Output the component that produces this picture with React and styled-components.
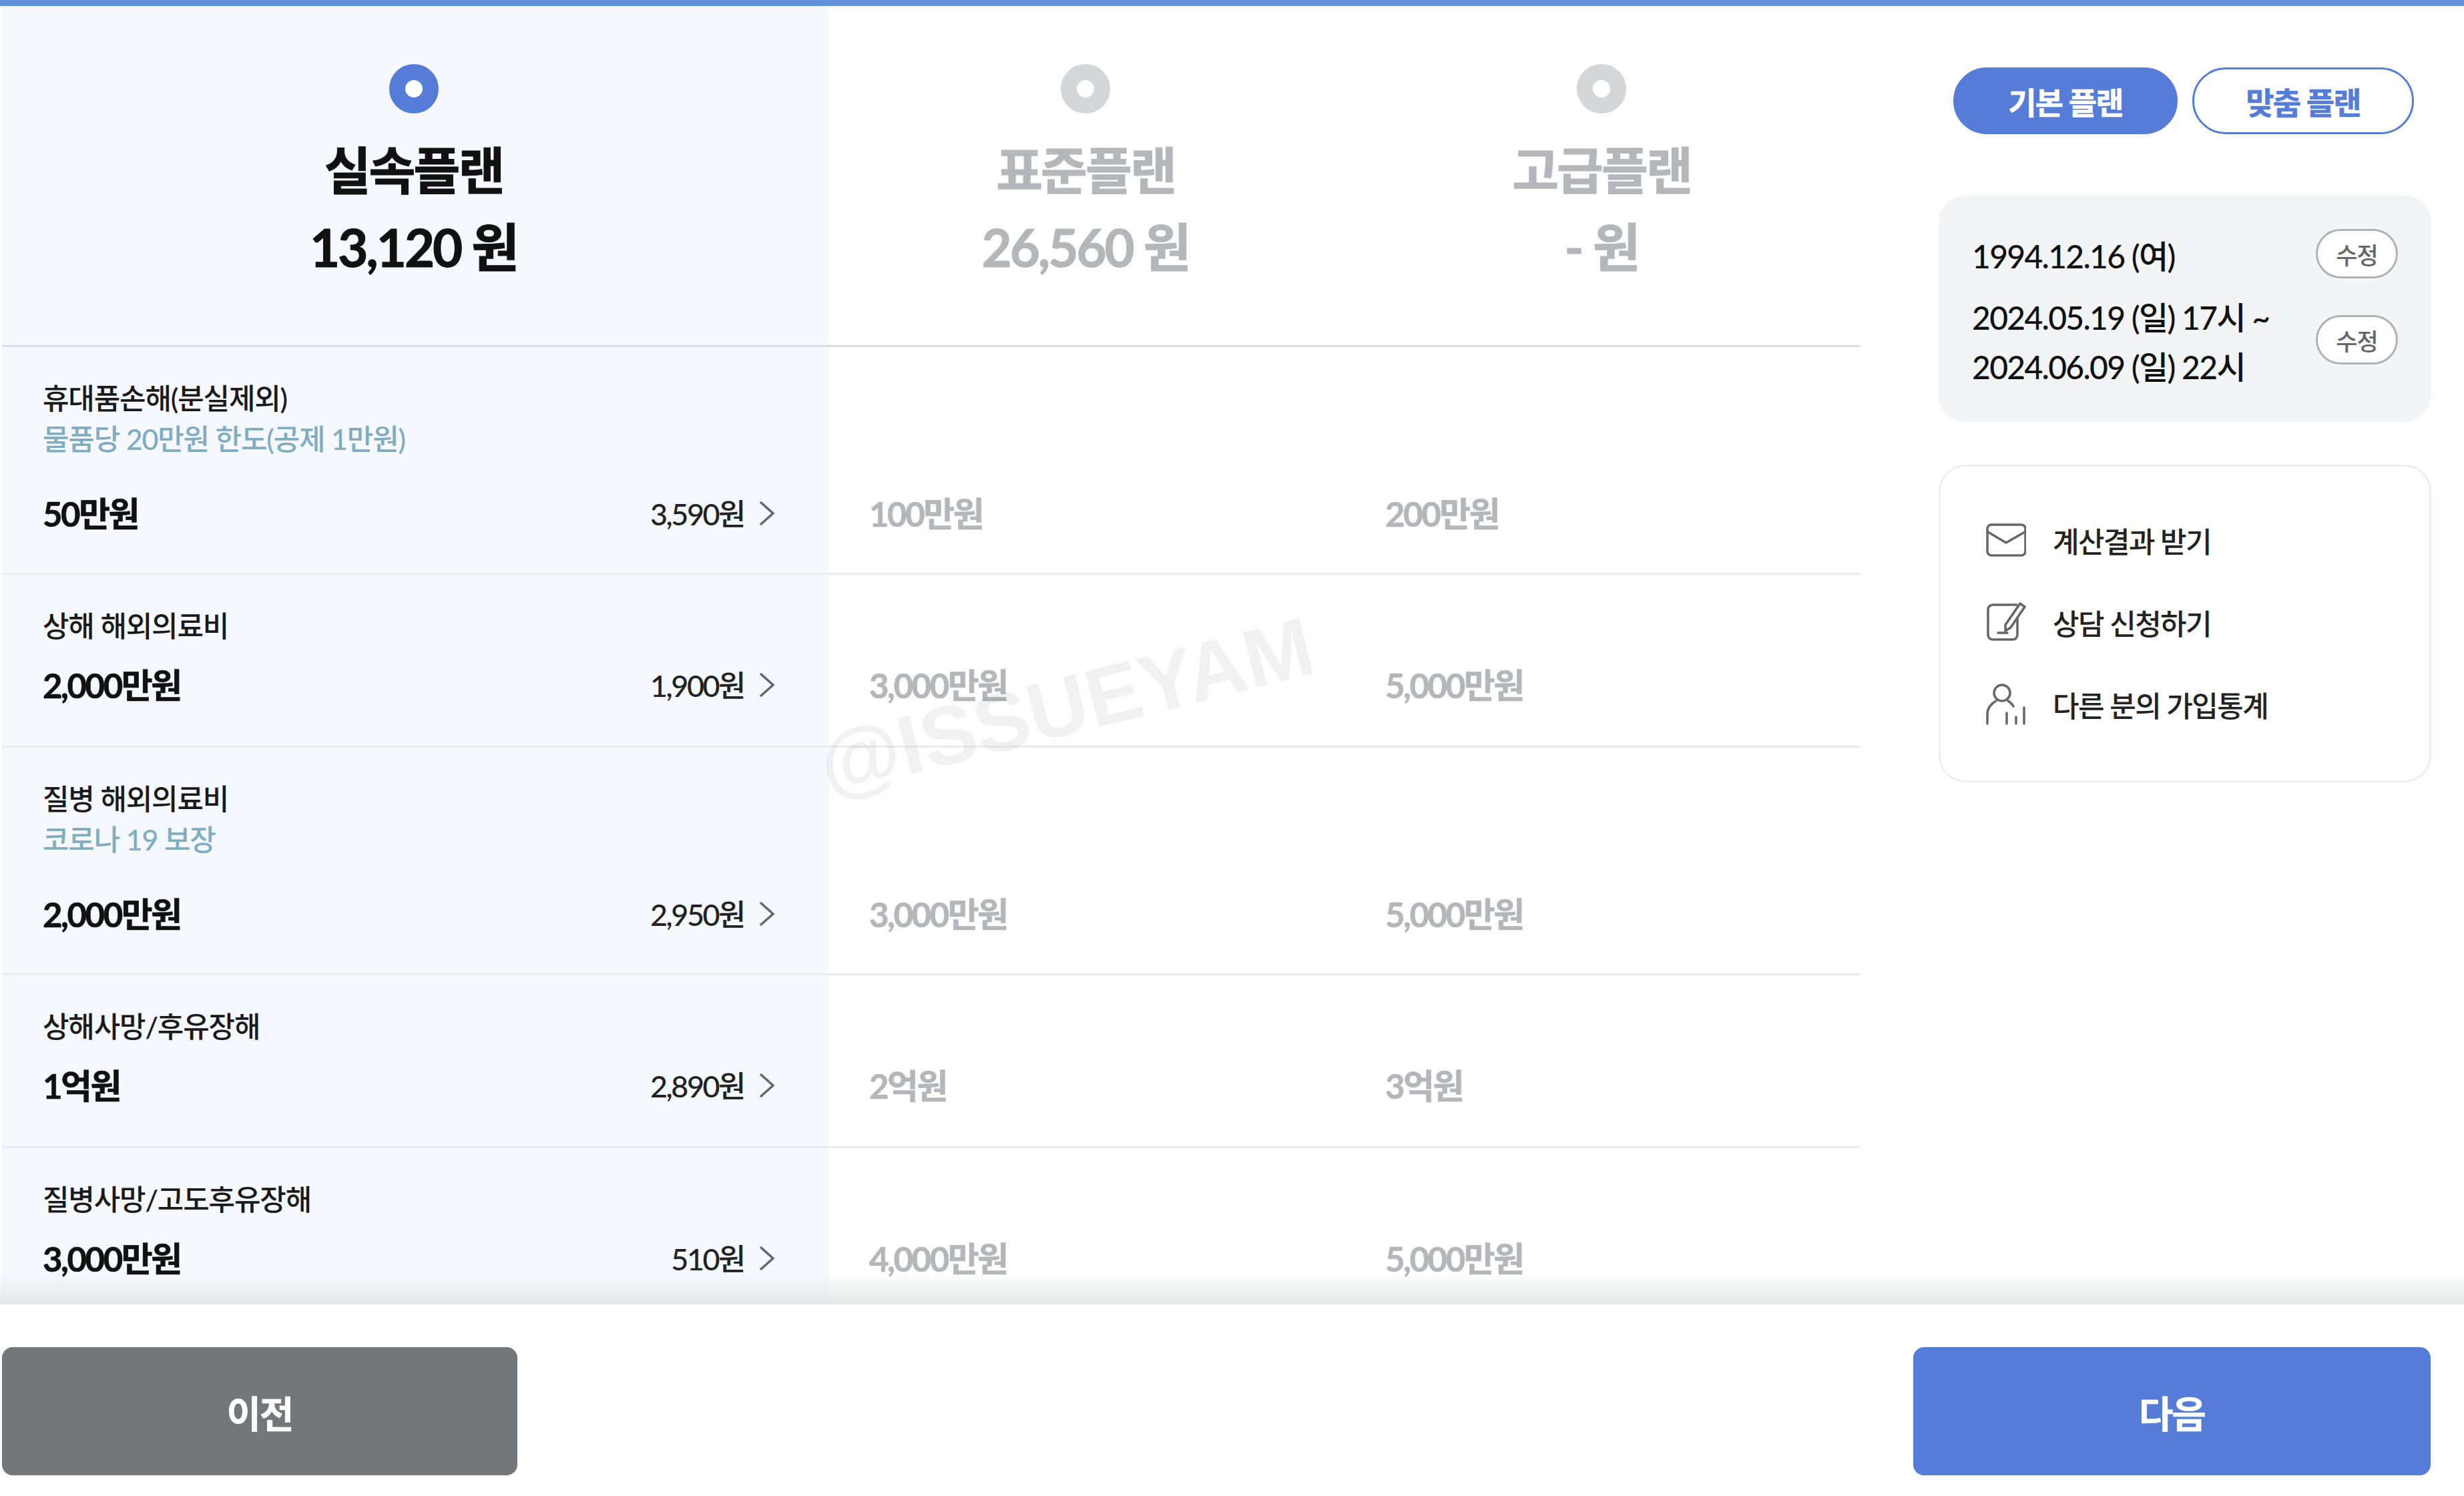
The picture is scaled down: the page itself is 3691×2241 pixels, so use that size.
import React from 'react';
import styled, { createGlobalStyle } from 'styled-components';

const GlobalStyle = createGlobalStyle`
  html, body {
    margin: 0;
    padding: 0;
    background: #fff;
    font-family: 'Lato', 'Noto Sans CJK KR', sans-serif;
    color: #111;
  }
  * {
    box-sizing: border-box;
  }
`;

const Page = styled.div`
  width: 3691px;
  height: 2241px;
  display: flex;
  flex-direction: column;
  overflow: hidden;
`;

const TopBar = styled.div`
  height: 9px;
  flex: none;
  background: #6492dc;
`;

const Main = styled.div`
  position: relative;
  height: 1945px;
  flex: none;
  display: flex;
  overflow: hidden;
`;

const Table = styled.div`
  width: 2784px;
  margin-left: 3px;
  flex: none;
`;

const PlanHead = styled.div`
  display: grid;
  grid-template-columns: 1238px 773px 773px;
  height: 511px;
  border-bottom: 3px solid #dcdddf;
`;

const PlanCell = styled.div`
  display: flex;
  flex-direction: column;
  align-items: center;
  padding: 87px ${props => (props.$active ? '5px' : '3px')} 0 0;
  background: ${props => (props.$active ? '#f5f8fe' : '#fff')};
  color: ${props => (props.$active ? '#111' : '#b5b6b9')};
`;

const Radio = styled.span`
  width: 74px;
  height: 74px;
  border-radius: 50%;
  background: #fff;
  border: 24px solid ${props => (props.$active ? '#557cd6' : '#d5d6d8')};
`;

const PlanName = styled.div`
  margin-top: 35px;
  font-size: 76px;
  line-height: 100px;
  font-weight: 700;
  letter-spacing: -3px;
  -webkit-text-stroke: 1px currentColor;
`;

const PlanPrice = styled.div`
  margin-top: 15px;
  font-size: 78px;
  line-height: 100px;
  font-weight: 700;
  letter-spacing: -3px;
  -webkit-text-stroke: 1px currentColor;
`;

const Row = styled.div`
  display: grid;
  grid-template-columns: 1238px 773px 773px;
  border-bottom: 3px solid #ebecee;
`;

const Cell = styled.div`
  display: flex;
  flex-direction: column;
  justify-content: flex-end;
  padding: 46px 80px ${props => (props.$note ? '61px' : '63px')} 61px;
  background: ${props => (props.$active ? '#f5f8fe' : 'transparent')};
`;

const Label = styled.div`
  font-size: 43px;
  line-height: 61px;
  letter-spacing: -1.2px;
  font-weight: 500;
  color: #1a1a1a;
`;

const Note = styled.div`
  font-size: 43px;
  line-height: 61px;
  letter-spacing: -1.2px;
  font-weight: 500;
  color: #7fadbf;
  margin-bottom: 23px;
`;

const ValueLine = styled.div`
  display: flex;
  align-items: center;
  justify-content: space-between;
  height: 60px;
  margin-top: 26px;
`;

const Value = styled.div`
  font-size: 51px;
  font-weight: 700;
  letter-spacing: -2.5px;
  color: ${props => (props.$active ? '#111' : '#b5b6b9')};
  -webkit-text-stroke: 0.6px currentColor;
`;

const Fee = styled.div`
  display: flex;
  align-items: center;
  gap: 22px;
  font-size: 45px;
  font-weight: 500;
  letter-spacing: -2.5px;
  color: #222;
`;

const ChevronIcon = styled.svg`
  width: 24px;
  height: 38px;
  margin-top: 4px;
  fill: none;
  stroke: #666;
  stroke-width: 3.5;
`;

const Watermark = styled.div`
  position: absolute;
  left: 1597px;
  top: 1048px;
  transform: translate(-50%, -50%) rotate(-14deg);
  font-family: 'Liberation Sans', Arial, sans-serif;
  font-size: 124px;
  font-weight: 700;
  white-space: nowrap;
  color: rgba(0, 0, 0, 0.055);
  pointer-events: none;
`;

const Side = styled.aside`
  width: 738px;
  margin-left: 117px;
  flex: none;
  padding-top: 92px;
`;

const Toggle = styled.div`
  display: flex;
  gap: 22px;
  padding-left: 22px;
`;

const ToggleButton = styled.div`
  width: ${props => (props.$active ? '336px' : '332px')};
  height: 100px;
  display: flex;
  align-items: center;
  justify-content: center;
  border-radius: 50px;
  border: 3px solid #557cd6;
  background: ${props => (props.$active ? '#557cd6' : '#fff')};
  color: ${props => (props.$active ? '#fff' : '#557cd6')};
  font-size: 46px;
  font-weight: 700;
  letter-spacing: -1.8px;
  -webkit-text-stroke: 0.6px currentColor;
`;

const DateCard = styled.div`
  margin-top: 92px;
  height: 339px;
  padding: 46px 50px 0 50px;
  border-radius: 40px;
  background: #f3f4f6;
`;

const DateRow = styled.div`
  display: flex;
  align-items: center;
  justify-content: space-between;
  margin-bottom: 10px;
`;

const DateText = styled.div`
  margin-top: 8px;
  font-size: 48px;
  line-height: 74px;
  font-weight: 500;
  letter-spacing: -1.7px;
  color: #111;
`;

const EditButton = styled.div`
  width: 123px;
  height: 74px;
  display: flex;
  align-items: center;
  justify-content: center;
  border-radius: 37px;
  border: 3px solid #b0b1b3;
  background: #fff;
  color: #666;
  font-size: 35px;
  font-weight: 500;
  letter-spacing: -1px;
`;

const LinkCard = styled.div`
  margin-top: 64px;
  height: 476px;
  padding: 48px 0 0 68px;
  border: 3px solid #eceef0;
  border-radius: 40px;
  background: #fff;
`;

const LinkRow = styled.div`
  display: flex;
  align-items: center;
  height: 123px;
`;

const LinkIcon = styled.svg`
  width: 60px;
  height: 62px;
  flex: none;
  margin-right: 40px;
  fill: none;
  stroke: #666;
  stroke-width: 3.5;
  stroke-linecap: round;
  stroke-linejoin: round;
`;

const LinkText = styled.div`
  font-size: 43px;
  font-weight: 500;
  letter-spacing: -1.6px;
  color: #222;
`;

const Footer = styled.footer`
  position: relative;
  flex: 1;
  display: flex;
  justify-content: space-between;
  padding: 64px 50px 0 3px;
  background: #fff;

  &::before {
    content: '';
    position: absolute;
    left: 0;
    right: 0;
    bottom: 100%;
    height: 46px;
    background: linear-gradient(to bottom, rgba(228, 229, 229, 0), #e4e5e5);
  }
`;

const NavButton = styled.div`
  width: ${props => (props.$primary ? '775px' : '772px')};
  height: 192px;
  display: flex;
  align-items: center;
  justify-content: center;
  border-radius: 16px;
  background: ${props => (props.$primary ? '#557cd6' : '#757679')};
  color: #fff;
  font-size: 56px;
  font-weight: 700;
  letter-spacing: -2px;
  -webkit-text-stroke: 0.6px currentColor;
`;

function Chevron() {
  return (
    <ChevronIcon viewBox="0 0 24 38">
      <polyline points="2,2 21,19 2,36" />
    </ChevronIcon>
  );
}

function MailIcon() {
  return (
    <LinkIcon viewBox="0 0 60 62">
      <rect x="2" y="8" width="57" height="46" rx="6" />
      <polyline points="3,19 30,35 58,19" />
    </LinkIcon>
  );
}

function NoteIcon() {
  return (
    <LinkIcon viewBox="0 0 60 62">
      <path d="M46 5H10a7 7 0 0 0-7 7v38a7 7 0 0 0 7 7h30a7 7 0 0 0 7-7V24" />
      <path d="M51 3l7 5-21 31-8 5 0-9z" />
      <path d="M18 47h14" />
    </LinkIcon>
  );
}

function PersonIcon() {
  return (
    <LinkIcon viewBox="0 0 60 62">
      <circle cx="24" cy="14" r="12" />
      <path d="M2 60V46c0-10 7-17 13-20" />
      <path d="M33 26c3 2 6 4 8 8" />
      <path d="M31 60V44" />
      <path d="M45 60V50" />
      <path d="M57 60V36" />
    </LinkIcon>
  );
}

const plans = [
  { name: '실속플랜', price: '13,120 원', active: true },
  { name: '표준플랜', price: '26,560 원' },
  { name: '고급플랜', price: '- 원' },
];

const coverages = [
  { label: '휴대품손해(분실제외)', note: '물품당 20만원 한도(공제 1만원)', values: ['50만원', '100만원', '200만원'], fee: '3,590원' },
  { label: '상해 해외의료비', values: ['2,000만원', '3,000만원', '5,000만원'], fee: '1,900원' },
  { label: '질병 해외의료비', note: '코로나 19 보장', values: ['2,000만원', '3,000만원', '5,000만원'], fee: '2,950원' },
  { label: '상해사망/후유장해', values: ['1억원', '2억원', '3억원'], fee: '2,890원' },
  { label: '질병사망/고도후유장해', values: ['3,000만원', '4,000만원', '5,000만원'], fee: '510원' },
];

export default function App() {
  return (
    <Page>
      <GlobalStyle />
      <TopBar />
      <Main>
        <Table>
          <PlanHead>
            {plans.map(plan => (
              <PlanCell key={plan.name} $active={plan.active}>
                <Radio $active={plan.active} />
                <PlanName>{plan.name}</PlanName>
                <PlanPrice>{plan.price}</PlanPrice>
              </PlanCell>
            ))}
          </PlanHead>
          {coverages.map(item => (
            <Row key={item.label}>
              <Cell $active $note={!!item.note}>
                <Label>{item.label}</Label>
                {item.note && <Note>{item.note}</Note>}
                <ValueLine>
                  <Value $active>{item.values[0]}</Value>
                  <Fee>
                    {item.fee}
                    <Chevron />
                  </Fee>
                </ValueLine>
              </Cell>
              <Cell $note={!!item.note}>
                <ValueLine>
                  <Value>{item.values[1]}</Value>
                </ValueLine>
              </Cell>
              <Cell $note={!!item.note}>
                <ValueLine>
                  <Value>{item.values[2]}</Value>
                </ValueLine>
              </Cell>
            </Row>
          ))}
        </Table>
        <Side>
          <Toggle>
            <ToggleButton $active>기본 플랜</ToggleButton>
            <ToggleButton>맞춤 플랜</ToggleButton>
          </Toggle>
          <DateCard>
            <DateRow>
              <DateText>1994.12.16 (여)</DateText>
              <EditButton>수정</EditButton>
            </DateRow>
            <DateRow>
              <DateText>
                2024.05.19 (일) 17시 ~
                <br />
                2024.06.09 (일) 22시
              </DateText>
              <EditButton>수정</EditButton>
            </DateRow>
          </DateCard>
          <LinkCard>
            <LinkRow>
              <MailIcon />
              <LinkText>계산결과 받기</LinkText>
            </LinkRow>
            <LinkRow>
              <NoteIcon />
              <LinkText>상담 신청하기</LinkText>
            </LinkRow>
            <LinkRow>
              <PersonIcon />
              <LinkText>다른 분의 가입통계</LinkText>
            </LinkRow>
          </LinkCard>
        </Side>
        <Watermark>@ISSUEYAM</Watermark>
      </Main>
      <Footer>
        <NavButton>이전</NavButton>
        <NavButton $primary>다음</NavButton>
      </Footer>
    </Page>
  );
}
